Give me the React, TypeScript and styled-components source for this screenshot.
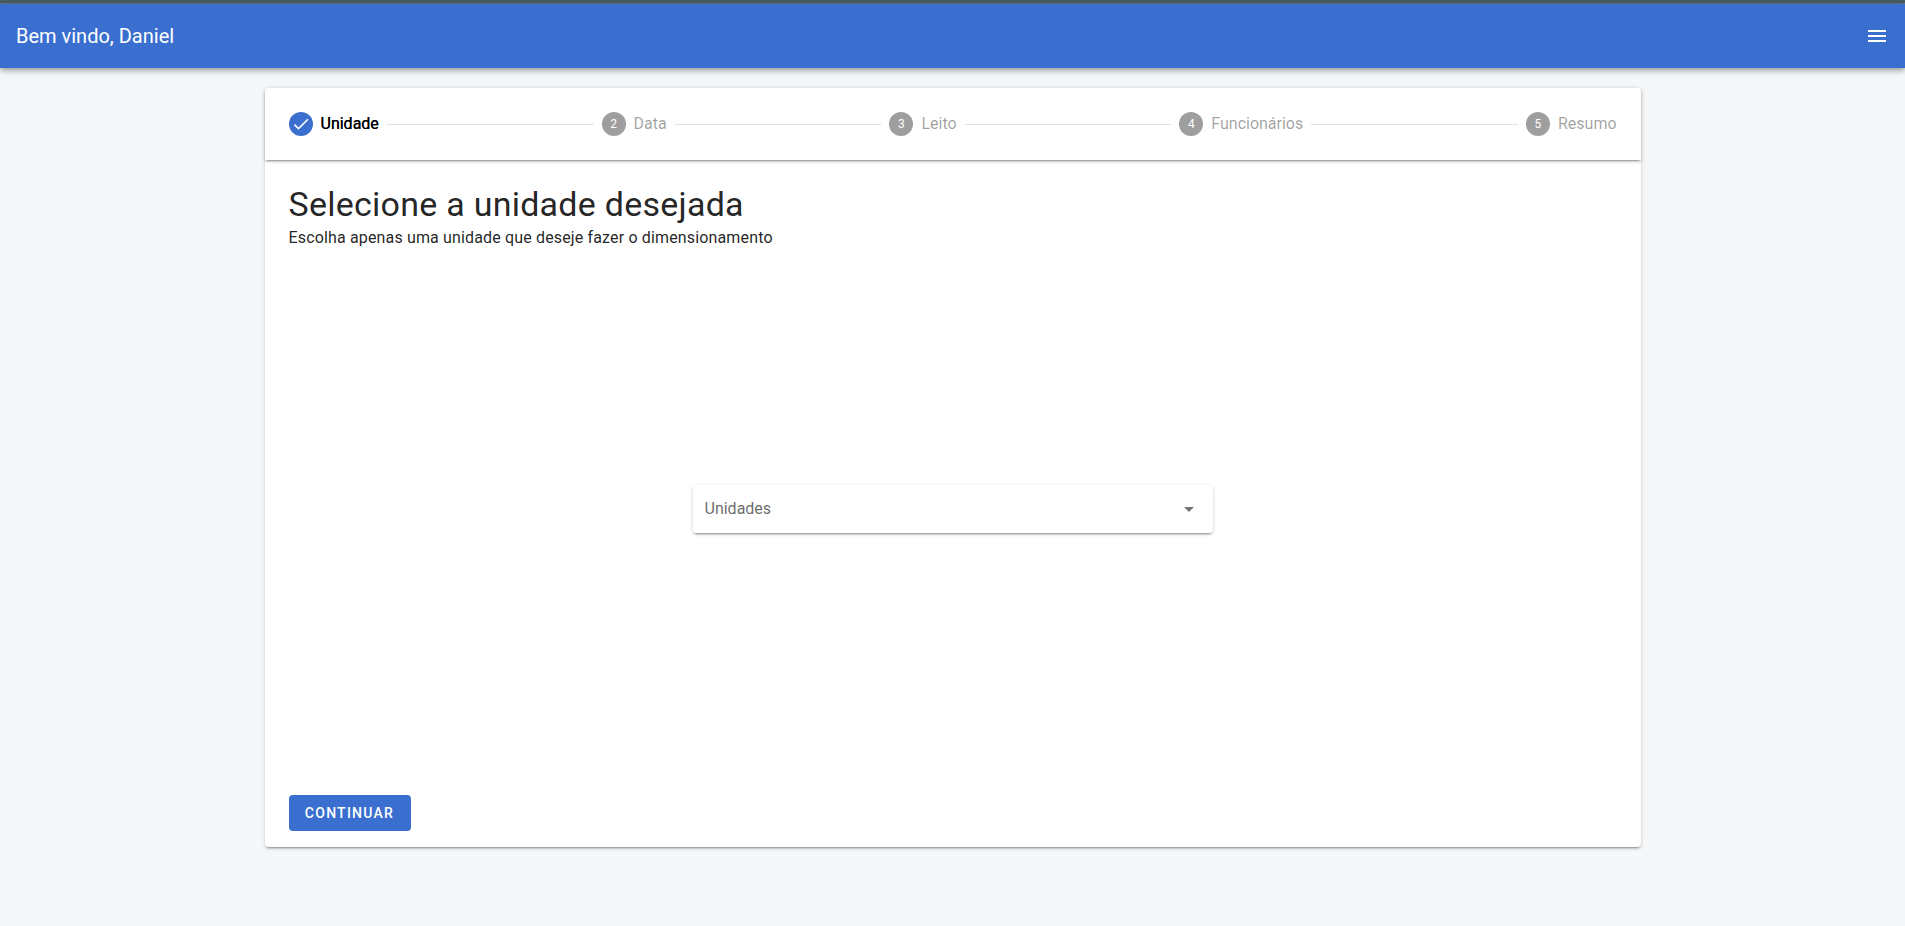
import React from "react";
import styled, { createGlobalStyle } from "styled-components";

const blue = "#3a6fcf";
const elevation2 =
  "0 3px 1px -2px rgba(0,0,0,.2), 0 2px 2px 0 rgba(0,0,0,.14), 0 1px 5px 0 rgba(0,0,0,.12)";

const GlobalStyle = createGlobalStyle`
  *, *::before, *::after { box-sizing: border-box; }
  body {
    margin: 0;
    background: #f5f7f9;
    color: rgba(0, 0, 0, .87);
    font-family: Roboto, "Liberation Sans", sans-serif;
    font-size: 16px;
    line-height: 24px;
  }
`;

const SystemBar = styled.div`
  height: 4px;
  background: #4b5b63;
  border-bottom: 1px solid #66797c;
`;

const AppBar = styled.header`
  display: flex;
  align-items: center;
  justify-content: space-between;
  height: 64px;
  padding: 0 16px;
  background: ${blue};
  color: #fff;
  box-shadow: 0 2px 4px -1px rgba(0,0,0,.2), 0 4px 5px 0 rgba(0,0,0,.14), 0 1px 10px 0 rgba(0,0,0,.12);
`;

const Welcome = styled.div`
  font-size: 20px;
`;

const MenuButton = styled.button`
  display: flex;
  align-items: center;
  justify-content: center;
  width: 48px;
  height: 48px;
  margin-right: -12px;
  padding: 0;
  border: 0;
  border-radius: 50%;
  background: transparent;
  color: inherit;
  cursor: pointer;
`;

const Main = styled.main`
  max-width: 1400px;
  margin: 0 auto;
  padding: 20px 12px;
`;

const Card = styled.section`
  border-radius: 4px;
  background: #fff;
  box-shadow: ${elevation2};
`;

const StepList = styled.ol`
  display: flex;
  align-items: center;
  height: 72px;
  margin: 0;
  padding: 0 24px;
  list-style: none;
  border-radius: 4px 4px 0 0;
  box-shadow: ${elevation2};
`;

const Step = styled.li<{ $active?: boolean }>`
  display: flex;
  align-items: center;
  gap: 8px;
  color: ${(p) => (p.$active ? "#000" : "rgba(0, 0, 0, .38)")};
  text-shadow: ${(p) => (p.$active ? "0 0 0 #000" : "none")};
`;

const StepBadge = styled.span<{ $active?: boolean }>`
  display: flex;
  align-items: center;
  justify-content: center;
  width: 24px;
  height: 24px;
  border-radius: 50%;
  background: ${(p) => (p.$active ? blue : "#9e9e9e")};
  color: #fff;
  font-size: 12px;
  text-shadow: none;
`;

const StepDivider = styled.li`
  flex: 1;
  height: 1px;
  margin: 0 8px;
  background: rgba(0, 0, 0, .12);
`;

const Content = styled.form`
  display: flex;
  flex-direction: column;
  padding: 24px 24px 16px;
`;

const Title = styled.h1`
  margin: 0;
  font-size: 34px;
  font-weight: 400;
  line-height: 40px;
  letter-spacing: .0073529412em;
`;

const Subtitle = styled.p`
  margin: 0;
  line-height: 28px;
  letter-spacing: .009375em;
`;

const Field = styled.div`
  display: grid;
  align-items: center;
  justify-content: center;
  grid-template-columns: minmax(0, 520px);
  min-height: 514px;
  margin-bottom: 29px;
`;

const SelectBox = styled.div`
  display: grid;
  align-items: center;
  grid-template-columns: 1fr 24px;
  border-radius: 4px;
  box-shadow: ${elevation2};
`;

const Select = styled.select`
  grid-area: 1 / 1 / 2 / 3;
  width: 100%;
  height: 48px;
  padding: 0 48px 0 12px;
  border: 0;
  border-radius: 4px;
  appearance: none;
  background: #fff;
  color: rgba(0, 0, 0, .6);
  font: inherit;
`;

const Caret = styled.svg`
  grid-area: 1 / 2;
  margin-left: -12px;
  pointer-events: none;
`;

const Submit = styled.button`
  align-self: flex-start;
  min-width: 122px;
  height: 36px;
  padding: 0 16px;
  border: 0;
  border-radius: 4px;
  background: ${blue};
  color: #fff;
  font-family: inherit;
  font-size: 14px;
  font-weight: 500;
  letter-spacing: .0892857143em;
  text-transform: uppercase;
  cursor: pointer;
`;

const steps = ["Unidade", "Data", "Leito", "Funcionários", "Resumo"];

export default function App() {
  return (
    <>
      <GlobalStyle />
      <SystemBar />
      <AppBar>
        <Welcome>Bem vindo, Daniel</Welcome>
        <MenuButton type="button" aria-label="Menu">
          <svg width="24" height="24" viewBox="0 0 24 24" fill="currentColor">
            <path d="M3 6h18v2H3V6m0 5h18v2H3v-2m0 5h18v2H3v-2z" />
          </svg>
        </MenuButton>
      </AppBar>
      <Main>
        <Card>
          <StepList>
            {steps.map((name, i) => (
              <React.Fragment key={name}>
                {i > 0 && <StepDivider role="presentation" />}
                <Step $active={i === 0} aria-current={i === 0 ? "step" : undefined}>
                  <StepBadge $active={i === 0}>
                    {i === 0 ? (
                      <svg width="20" height="20" viewBox="0 0 24 24" fill="currentColor">
                        <path d="M21 7 9 19l-5.500-5.500 1.410-1.410L9 16.170 19.590 5.590 21 7z" />
                      </svg>
                    ) : (
                      i + 1
                    )}
                  </StepBadge>
                  {name}
                </Step>
              </React.Fragment>
            ))}
          </StepList>
          <Content onSubmit={(e) => e.preventDefault()}>
            <Title>Selecione a unidade desejada</Title>
            <Subtitle>Escolha apenas uma unidade que deseje fazer o dimensionamento</Subtitle>
            <Field>
              <SelectBox>
                <Select aria-label="Unidades" defaultValue="">
                  <option value="">Unidades</option>
                </Select>
                <Caret width="24" height="24" viewBox="0 0 24 24" fill="rgba(0,0,0,.54)">
                  <path d="M7 10l5 5 5-5H7z" />
                </Caret>
              </SelectBox>
            </Field>
            <Submit type="submit">Continuar</Submit>
          </Content>
        </Card>
      </Main>
    </>
  );
}
